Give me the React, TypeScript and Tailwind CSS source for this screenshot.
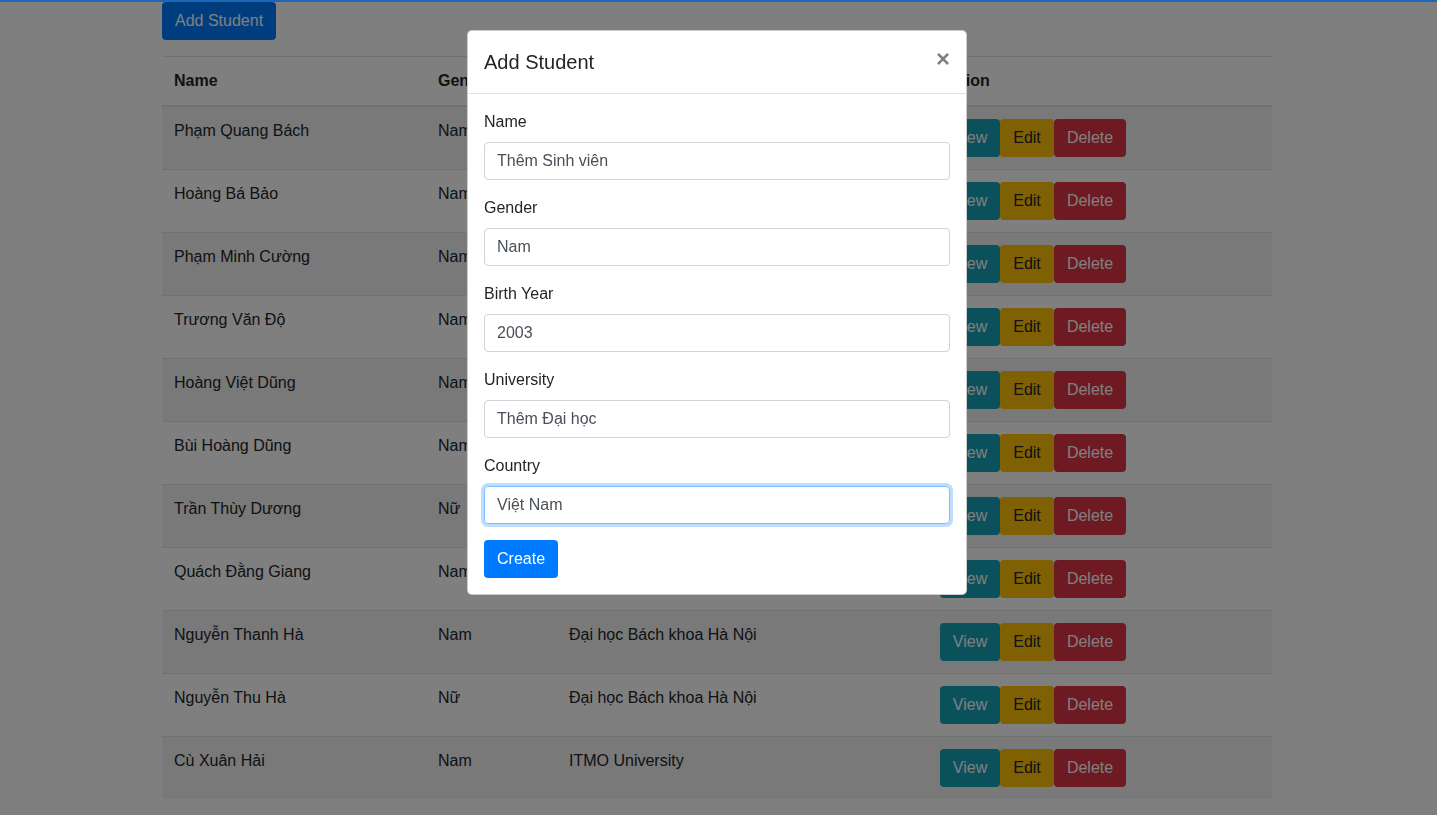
import React from "react";

const rows: [string, string, string][] = [
  ["Phạm Quang Bách", "Nam", "Đại học Bách khoa Hà Nội"],
  ["Hoàng Bá Bảo", "Nam", "Đại học Bách khoa Hà Nội"],
  ["Phạm Minh Cường", "Nam", "Đại học Bách khoa Hà Nội"],
  ["Trương Văn Độ", "Nam", "Đại học Bách khoa Hà Nội"],
  ["Hoàng Việt Dũng", "Nam", "Đại học Bách khoa Hà Nội"],
  ["Bùi Hoàng Dũng", "Nam", "Đại học Bách khoa Hà Nội"],
  ["Trần Thùy Dương", "Nữ", "Đại học Bách khoa Hà Nội"],
  ["Quách Đằng Giang", "Nam", "Đại học Bách khoa Hà Nội"],
  ["Nguyễn Thanh Hà", "Nam", "Đại học Bách khoa Hà Nội"],
  ["Nguyễn Thu Hà", "Nữ", "Đại học Bách khoa Hà Nội"],
  ["Cù Xuân Hải", "Nam", "ITMO University"],
];

const fields: { label: string; value: string; focus?: boolean }[] = [
  { label: "Name", value: "Thêm Sinh viên" },
  { label: "Gender", value: "Nam" },
  { label: "Birth Year", value: "2003" },
  { label: "University", value: "Thêm Đại học" },
  { label: "Country", value: "Việt Nam", focus: true },
];

export default function App() {
  return (
    <div
      className="min-h-[815px] bg-white text-[#212529] text-[16px] leading-[24px]"
      style={{ fontFamily: '"Liberation Sans", Arial, sans-serif' }}
    >
      <div className="relative z-50 h-[2px] bg-[#1a68b6]" />
      <div className="w-[1110px] ml-[162px]">
        <button className="h-[38px] px-[13px] bg-[#007bff] text-white rounded-[4px] mb-[16px]">
          Add Student
        </button>
        <table className="w-[1110px] border-collapse table-fixed">
          <colgroup>
            <col className="w-[264px]" />
            <col className="w-[131px]" />
            <col className="w-[371px]" />
            <col className="w-[344px]" />
          </colgroup>
          <thead>
            <tr>
              {["Name", "Gender", "University", "Action"].map((h) => (
                <th
                  key={h}
                  className="text-left font-bold px-[12px] py-[12px] border-t border-b-2 border-[#dee2e6] align-bottom"
                >
                  {h}
                </th>
              ))}
            </tr>
          </thead>
          <tbody>
            {rows.map((r, i) => (
              <tr key={i} className={i % 2 === 0 ? "bg-[#f2f2f2]" : ""}>
                <td className="px-[12px] py-[12px] border-t border-[#dee2e6] align-top">{r[0]}</td>
                <td className="px-[12px] py-[12px] border-t border-[#dee2e6] align-top">{r[1]}</td>
                <td className="px-[12px] py-[12px] border-t border-[#dee2e6] align-top">{r[2]}</td>
                <td className="px-[12px] py-[12px] border-t border-[#dee2e6] align-top">
                  <div className="flex">
                    <button className="h-[38px] w-[60px] bg-[#17a2b8] text-white rounded-[4px]">View</button>
                    <button className="h-[38px] w-[54px] bg-[#ffc107] text-[#212529] rounded-[4px]">Edit</button>
                    <button className="h-[38px] w-[72px] bg-[#dc3545] text-white rounded-[4px]">Delete</button>
                  </div>
                </td>
              </tr>
            ))}
          </tbody>
        </table>
      </div>

      <div className="fixed inset-0 z-40 bg-black/50" />
      <div className="fixed inset-0 z-50 flex justify-start pl-[467px] pt-[30px]">
        <div className="w-[500px] h-fit bg-white border border-black/20 rounded-[5px] flex flex-col">
          <div className="flex items-start px-[16px] py-[16px] border-b border-[#dee2e6]">
            <h5 className="text-[20px] leading-[30px] font-normal">Add Student</h5>
            <button className="ml-auto -mr-[16px] mb-[-16px] p-[16px] text-[24px] leading-[24px] font-bold text-black opacity-50 mt-[-16px]">
              ×
            </button>
          </div>
          <div className="p-[16px] flex flex-col">
            {fields.map((f) => (
              <div key={f.label} className="mb-[16px]">
                <div className="mb-[8px]">{f.label}</div>
                <div
                  className={
                    "h-[38px] px-[12px] flex items-center rounded-[4px] border text-[#495057] " +
                    (f.focus
                      ? "border-[#80bdff] shadow-[0_0_0_3px_rgba(0,123,255,0.25)]"
                      : "border-[#ced4da]")
                  }
                >
                  {f.value}
                </div>
              </div>
            ))}
            <div>
              <button className="h-[38px] px-[13px] bg-[#007bff] text-white rounded-[4px]">Create</button>
            </div>
          </div>
        </div>
      </div>
    </div>
  );
}
